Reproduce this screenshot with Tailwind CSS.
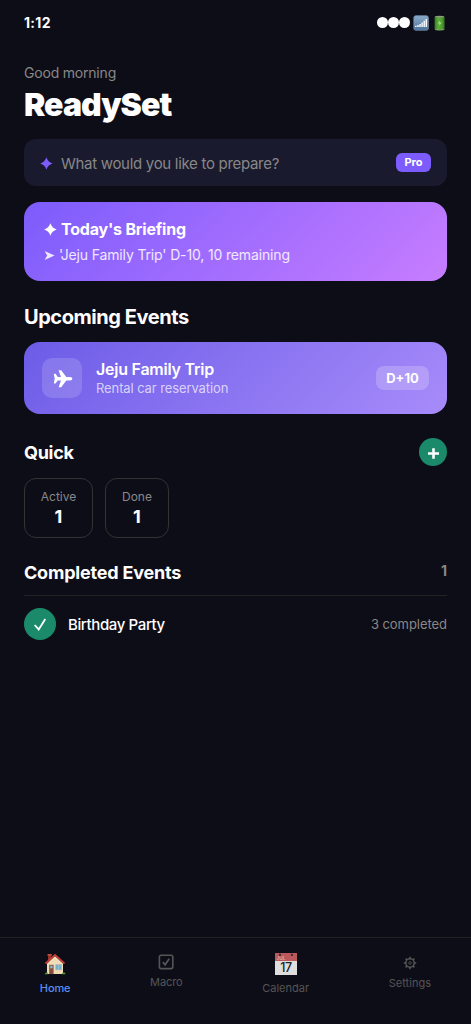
<!DOCTYPE html>
<html lang="en">
<head>
<meta charset="utf-8">
<meta name="viewport" content="width=device-width, initial-scale=1">
<title>ReadySet</title>
<script src="https://cdn.jsdelivr.net/npm/@tailwindcss/browser@4"></script>
</head>
<body class="bg-[#0d0d18] text-white font-['Inter','Liberation_Sans',sans-serif] antialiased">
<div class="flex h-screen w-full flex-col overflow-hidden whitespace-nowrap">
  <header class="flex h-11 shrink-0 items-center justify-between px-6 pt-0.5">
    <span class="text-sm leading-5 font-bold tracking-[0.3px]">1:12</span>
    <div class="flex items-center">
      <div class="mb-px flex">
        <span class="size-[11px] rounded-full bg-white"></span>
        <span class="size-[11px] rounded-full bg-white"></span>
        <span class="size-[11px] rounded-full bg-white"></span>
      </div>
      <svg class="ml-[3px] size-[16px]" viewBox="0 0 16 16">
        <defs><linearGradient id="sig" x2="0" y2="1"><stop stop-color="#8baccb"/><stop offset="1" stop-color="#4d7199"/></linearGradient></defs>
        <rect x=".8" y=".7" width="14.6" height="14.6" rx="2" fill="url(#sig)" stroke="#7894b3" stroke-width=".7"/>
        <path d="M2.8 12v-1.2M4.9 12v-2M7 12V9M9.1 12V7.4M11.2 12V5.7M13.3 12V4" stroke="#fff" stroke-width="1.4"/>
      </svg>
      <svg class="ml-[3px] h-[16px] w-[15px]" viewBox="0 0 15 16">
        <defs><linearGradient id="bat"><stop stop-color="#38752d"/><stop offset=".35" stop-color="#5cae3b"/><stop offset=".75" stop-color="#4d9b30"/><stop offset="1" stop-color="#356b27"/></linearGradient></defs>
        <rect x="2.6" y="1" width="10" height="14.2" rx="1.6" fill="url(#bat)"/>
        <ellipse cx="7.6" cy="1.6" rx="4.4" ry=".9" fill="#8a9c7c"/>
        <path d="M3 14.5q4.6 1.2 9.2 0" stroke="#98a68e" fill="none" stroke-width=".6"/>
        <path d="M8.2 5.5 5.7 8.6h2L7 11l2.8-3.4h-2z" fill="#a5e07c"/>
      </svg>
    </div>
  </header>

  <main class="flex flex-1 flex-col px-6 pt-5">
    <p class="text-sm leading-[18px] tracking-[-0.2px] text-[#888]">Good morning</p>
    <h1 class="mt-[3px] text-[32px] leading-10 font-black tracking-[-0.95px]">ReadySet</h1>

    <div class="mt-[14px] flex h-[47px] shrink-0 items-center rounded-xl bg-[#1a1a2e] px-4">
      <svg class="mt-[2px] size-[13px]" viewBox="0 0 13 13"><path d="M6.4.3Q7.8 5.1 12.6 6.5 7.8 7.9 6.4 12.7 5 7.9.2 6.5 5 5.1 6.4.3z" fill="#7c5cfc"/></svg>
      <span class="mt-0.5 ml-2 text-[15px] leading-5 tracking-[-0.3px] text-[#888]">What would you like to prepare?</span>
      <span class="ml-auto flex h-[19px] w-[35px] items-center justify-center rounded-md bg-[#7c5cfc] text-[11px] font-bold">Pro</span>
    </div>

    <section class="mt-4 flex h-[79px] shrink-0 flex-col rounded-2xl bg-[linear-gradient(135deg,#7c5cfc,#c77dff)] px-5 pt-[17px]">
      <div class="flex h-5 items-center">
        <svg class="size-[13px]" viewBox="0 0 13 13"><path d="M6.4.2Q7.9 5 12.7 6.5 7.9 8 6.4 12.8 4.9 8 .1 6.5 4.9 5 6.4.2z" fill="#fff"/></svg>
        <h2 class="ml-1 text-base leading-5 font-bold tracking-[-0.2px]">Today's Briefing</h2>
      </div>
      <div class="mt-[7px] flex h-[18px] items-center text-white/85">
        <svg class="size-[11px]" viewBox="0 0 11 11"><path d="M.6 1 10.6 5.5.6 10 3.2 5.5z" fill="currentColor"/></svg>
        <p class="ml-1 text-sm leading-[18px] tracking-[-0.15px]">'Jeju Family Trip' D-10, 10 remaining</p>
      </div>
    </section>

    <h2 class="mt-6 text-xl leading-6 font-bold tracking-[-0.44px]">Upcoming Events</h2>
    <section class="mt-[13px] flex h-[72px] shrink-0 items-center rounded-2xl bg-[linear-gradient(135deg,#6c5ce7,#a78bfa)] px-[18px]">
      <div class="flex size-10 items-center justify-center rounded-[10px] bg-white/15">
        <svg class="mt-[2px] ml-[2px] size-5" viewBox="0 0 20 20"><path d="M.8 4.8h1.7l2.3 3.1h3.2L5.6 1.2h2.6L13.3 7.9h3.6Q19.4 8.2 19.4 9.7T16.9 11.5h-3.6L8.2 18.2H5.6l2.4-6.7H4.8L2.5 14.6H.8L1.7 9.7z" fill="#fff"/></svg>
      </div>
      <div class="ml-3.5">
        <h3 class="-mt-px text-base leading-5 font-semibold tracking-[-0.24px]">Jeju Family Trip</h3>
        <p class="mt-px text-[13px] leading-[17px] tracking-[-0.1px] text-white/70">Rental car reservation</p>
      </div>
      <span class="ml-auto flex h-6 w-[53px] items-center justify-center rounded-lg bg-white/20 pt-px text-[13px] font-bold">D+10</span>
    </section>

    <div class="mt-6 flex h-7 shrink-0 items-center justify-between">
      <h2 class="mt-0.5 text-lg leading-6 font-bold tracking-[-0.3px]">Quick</h2>
      <button class="flex size-7 items-center justify-center rounded-full bg-[#1b8a6b]"><svg class="mt-[3px] size-[11px]" viewBox="0 0 11 11"><path d="M0 5.5h11M5.5.3v10.4" stroke="#fff" stroke-width="2.6"/></svg></button>
    </div>

    <div class="mt-3 flex gap-3">
      <div class="flex h-[60px] w-[69px] flex-col items-center rounded-xl border border-[#333] pt-[10px]">
        <span class="text-xs leading-4 text-[#888]">Active</span>
        <span class="mt-px text-lg leading-[22px] font-bold">1</span>
      </div>
      <div class="flex h-[60px] w-[64px] flex-col items-center rounded-xl border border-[#333] pt-[10px]">
        <span class="text-xs leading-4 text-[#888]">Done</span>
        <span class="mt-px text-lg leading-[22px] font-bold">1</span>
      </div>
    </div>

    <div class="mt-[22px] flex h-6 items-center justify-between">
      <h2 class="mt-0.5 text-lg leading-6 font-bold tracking-[-0.2px]">Completed Events</h2>
      <span class="-mt-0.5 text-sm leading-5 font-bold text-[#888]">1</span>
    </div>
    <div class="mt-[11px] flex items-center border-t border-[#222] pt-3">
      <span class="flex size-8 items-center justify-center rounded-full bg-[#1b8a6b]"><svg class="size-[14px]" viewBox="0 0 14 14"><path d="m1.7 8 4 4.4L12.3 2" fill="none" stroke="#fff" stroke-width="1.8"/></svg></span>
      <span class="mt-0.5 ml-3 text-[15px] leading-5 font-medium tracking-[-0.38px]">Birthday Party</span>
      <span class="ml-auto text-[13px] leading-4 tracking-[-0.05px] text-[#888]">3 completed</span>
    </div>
  </main>

  <nav class="flex h-[87px] shrink-0 items-start justify-around border-t border-[#222] text-[11px] leading-[14px] text-[#555]">
    <a class="flex flex-col items-center pt-[15px] text-[#5b8def]">
      <svg class="size-[22px]" viewBox="0 0 22 22">
        <path d="M4 1.5h3.3v6H4z" fill="#96352d"/><path d="M3.5 1h4.3v1.7H3.5z" fill="#be4b3e"/>
        <path d="M3 10.5 11 3l8 7.5v10.6H3z" fill="#f0dcb6"/>
        <path d="M1.5 10.5 11 1.9l9.5 8.6" fill="none" stroke="#c83c36" stroke-width="1.7"/>
        <path d="M5.2 11.8h4.4v9.3H5.2z" fill="#87513b"/><path d="M6.2 12.7h2.4v2.6H6.2z" fill="#83bddb"/>
        <path d="M11.8 11.7h5.6v5h-5.6z" fill="#6db2d6" stroke="#a8aaa0" stroke-width=".6"/>
        <path d="M14.6 11.7v5" stroke="#c7dbe0" stroke-width=".5"/>
        <path d="M.8 21.3q.3-2.4 2.6-1.8l.9 1.8zM17.7 21.3q.4-2.6 3.4-1.5l.2 1.5z" fill="#5d9a38"/>
      </svg>
      <span class="mt-1.5 font-medium tracking-[-0.1px]">Home</span>
    </a>
    <a class="flex flex-col items-center pt-4">
      <svg class="size-4" viewBox="0 0 16 16" fill="none" stroke="currentColor"><rect x="1.4" y="1.2" width="13.4" height="13.4" rx="1.8" stroke-width="1.6"/><path d="m4.8 8.2 2.3 2.6L11.2 4.8" stroke-width="1.8"/></svg>
      <span class="mt-[5px] tracking-[-0.1px]">Macro</span>
    </a>
    <a class="flex flex-col items-center pt-[15px]">
      <svg class="size-[22px]" viewBox="0 0 22 22">
        <path d="M0 0h22v22H0z" fill="#dedede"/><path d="M0 0h22v8H0z" fill="#b9595b"/>
        <circle cx="5" cy="2" r="1.1" fill="#292126"/><circle cx="17" cy="2" r="1.1" fill="#292126"/><path d="M4.5 0 6 2M16 0l1.5 2" stroke="#4f3d43" stroke-width=".7"/>
        <text x="1.5" y="7.1" font-size="4.8" font-weight="600" fill="#dfa7a8">JUL</text>
        <text x="11" y="19.4" text-anchor="middle" font-size="12.5" font-weight="500" letter-spacing="-.3" fill="#222">17</text>
      </svg>
      <span class="mt-1.5">Calendar</span>
    </a>
    <a class="flex flex-col items-center pt-[18px]">
      <svg class="size-[14px]" viewBox="0 0 14 14" fill="none" stroke="currentColor"><circle cx="7" cy="7" r="4.2" stroke-width="1.5"/><circle cx="7" cy="7" r="1.3" stroke-width=".8"/><path d="M7 .8v2M7 11.2v2M.8 7h2M11.2 7h2M2.6 2.6 4 4M10 10l1.4 1.4M2.6 11.4 4 10M10 4l1.4-1.4" stroke-width="1.6"/></svg>
      <span class="mt-1.5 tracking-[0.05px]">Settings</span>
    </a>
  </nav>
</div>
</body>
</html>
